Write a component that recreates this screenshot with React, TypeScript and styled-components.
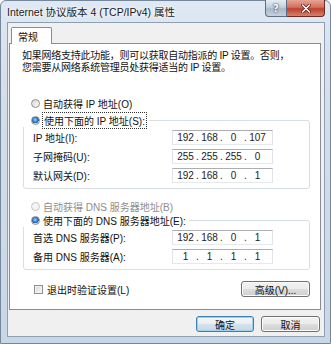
import React from "react";
import styled, { createGlobalStyle } from "styled-components";

const GlobalStyle = createGlobalStyle`
  html, body {
    margin: 0;
    padding: 0;
    width: 331px;
    height: 344px;
    overflow: hidden;
  }
  body {
    font-family: "Liberation Sans", "Noto Sans CJK SC", sans-serif;
    font-size: 10px;
    color: #111;
  }
`;

const Window = styled.div`
  width: 331px;
  height: 344px;
  box-sizing: border-box;
  display: flex;
  flex-direction: column;
  padding: 0 5px 6px 6px;
  background: linear-gradient(180deg, #dfe8f3 0%, #d3deeb 30%, #c9d6e5 100%);
  border: 1px solid #75879b;
  border-radius: 6px 6px 0 0;
`;

const TitleBar = styled.div`
  height: 21px;
  display: flex;
  align-items: flex-start;
`;

const Title = styled.div`
  padding-top: 5px;
  font-size: 10.5px;
  line-height: 13px;
  color: #1a1a1a;
  text-shadow: 0 0 6px #ffffff, 0 0 3px #ffffff;
`;

const CaptionButtons = styled.div`
  margin-left: auto;
  margin-top: -1px;
  display: flex;
`;

const CaptionButton = styled.div<{ $close?: boolean }>`
  height: 17px;
  width: ${p => (p.$close ? "38px" : "22px")};
  box-sizing: border-box;
  display: flex;
  align-items: center;
  justify-content: center;
  border: 1px solid ${p => (p.$close ? "#6a2b22" : "#5d6f84")};
  border-top: none;
  border-left-width: ${p => (p.$close ? "0" : "1px")};
  border-radius: ${p => (p.$close ? "0 0 4px 0" : "0 0 0 4px")};
  background: ${p =>
    p.$close
      ? "linear-gradient(180deg, #e8a493 0%, #d4705c 45%, #c0402a 55%, #d4826e 100%)"
      : "linear-gradient(180deg, #e6ecf3 0%, #c3cfdc 45%, #a9b8c9 55%, #c4d1de 100%)"};
  color: #fff;
  font-family: "DejaVu Sans", sans-serif;
  font-weight: bold;
  font-size: 10px;
  text-shadow: 0 0 2px #30404f, 0 0 1px #30404f;
`;

const Client = styled.div`
  flex: 1;
  display: flex;
  flex-direction: column;
  background: #f0f0f0;
  border: 1px solid #8e9fb4;
  padding: 4px 3px 4px 1px;
`;

const TabStrip = styled.div`
  display: flex;
  padding-left: 2px;
`;

const Tab = styled.div`
  position: relative;
  z-index: 1;
  width: 41px;
  height: 17px;
  box-sizing: border-box;
  margin-bottom: -1px;
  border: 1px solid #898c95;
  border-bottom: none;
  border-radius: 2px 2px 0 0;
  background: #fff;
  display: flex;
  align-items: center;
  padding-left: 6px;
  font-size: 10px;
`;

const Panel = styled.div`
  flex: 1;
  display: flex;
  flex-direction: column;
  border: 1px solid #898c95;
  background: #fff;
  padding: 6px 10px 0 12px;
`;

const Intro = styled.p`
  margin: 0;
  font-size: 10px;
  line-height: 12px;
  letter-spacing: -0.25px;
`;

const RadioRow = styled.label<{ $disabled?: boolean }>`
  display: flex;
  align-items: center;
  gap: 3px;
  height: 14px;
  padding-left: 9px;
  font-size: 10px;
  color: ${p => (p.$disabled ? "#8d8d8d" : "#111")};
  margin-top: ${p => (p.$disabled ? "10px" : "0")};
`;

const FirstRadio = styled(RadioRow)`
  margin-top: 22px;
`;

const RadioDot = styled.span<{ $checked?: boolean; $disabled?: boolean }>`
  width: 9px;
  height: 9px;
  box-sizing: border-box;
  border-radius: 50%;
  border: 1px solid ${p => (p.$disabled ? "#c4c4c4" : "#8e8f8f")};
  background: ${p =>
    p.$checked
      ? "radial-gradient(circle at 45% 40%, #9fd5ff 0%, #3a8ee0 35%, #1a4f9a 60%, #e8eef5 66%, #f4f4f4 100%)"
      : p.$disabled
      ? "#f4f4f4"
      : "linear-gradient(135deg, #d9d9d9, #fafafa)"};
  flex-shrink: 0;
`;

const FocusText = styled.span`
  outline: 1px dotted #333;
  outline-offset: 0;
  padding: 0 1px;
`;

const Group = styled.fieldset<{ $gap?: number }>`
  margin: ${p => p.$gap ?? 0}px 0 0 1px;
  padding: 3px 0 5px 9px;
  border: 1px solid #d5dfe5;
  border-radius: 3px;
  min-width: 0;
`;

const GroupLegend = styled.legend`
  margin-left: -11px;
  padding: 0 3px 0 0;
`;

const Fields = styled.div`
  display: grid;
  grid-template-columns: 139px 101px;
  row-gap: 4px;
  align-items: center;
`;

const FieldLabel = styled.span`
  font-size: 10px;
`;

const IpBox = styled.div`
  height: 15px;
  box-sizing: border-box;
  display: flex;
  align-items: center;
  padding-left: 3px;
  background: #fff;
  border: 1px solid #e2e3ea;
  border-top-color: #abadb3;
  border-bottom-color: #e3e9ef;
  font-size: 10px;
  color: #222;
`;

const Octet = styled.span`
  width: 19px;
  text-align: center;
`;

const Dot = styled.span`
  width: 5px;
  text-align: center;
`;

const BottomRow = styled.div`
  display: flex;
  align-items: center;
  justify-content: space-between;
  margin-top: 11px;
  padding-left: 12px;
`;

const CheckLabel = styled.label`
  display: flex;
  align-items: center;
  gap: 4px;
  font-size: 10px;
`;

const CheckBox = styled.span`
  width: 9px;
  height: 9px;
  box-sizing: border-box;
  border: 1px solid #8e8f8f;
  background: linear-gradient(135deg, #d6d6d6, #f8f8f8);
  box-shadow: inset 0 0 0 1px #f4f4f4;
`;

const Button = styled.div<{ $default?: boolean; $width: number }>`
  width: ${p => p.$width}px;
  height: 16px;
  box-sizing: border-box;
  display: flex;
  align-items: center;
  justify-content: center;
  border: 1px solid ${p => (p.$default ? "#3c7fb1" : "#707070")};
  border-radius: 3px;
  background: ${p =>
    p.$default
      ? "linear-gradient(180deg, #f4f8fb 0%, #e6edf3 50%, #d6e2ec 51%, #c9d8e5 100%)"
      : "linear-gradient(180deg, #f2f2f2 0%, #ebebeb 50%, #dddddd 51%, #cfcfcf 100%)"};
  box-shadow: inset 0 0 0 1px ${p => (p.$default ? "#9ed0ef" : "#fbfbfb")};
  font-size: 10px;
  color: #111;
`;

const DialogButtons = styled.div`
  display: flex;
  justify-content: flex-end;
  gap: 7px;
  margin-top: 6px;
  padding-right: 1px;
`;

const Spacer = styled.div`
  flex: 1;
`;

const CloseIcon = () => (
  <svg width="10" height="9" viewBox="0 0 10 9">
    <path d="M1.5 1 L8.5 8 M8.5 1 L1.5 8" stroke="#5a1a12" strokeWidth="3" strokeLinecap="round" />
    <path d="M1.5 1 L8.5 8 M8.5 1 L1.5 8" stroke="#fff" strokeWidth="1.6" strokeLinecap="round" />
  </svg>
);

const IpAddress: React.FC<{ value: string }> = ({ value }) => {
  const parts = value.split(".");
  return (
    <IpBox>
      {parts.map((p, i) => (
        <React.Fragment key={i}>
          <Octet>{p}</Octet>
          {i < 3 && <Dot>.</Dot>}
        </React.Fragment>
      ))}
    </IpBox>
  );
};

export default function App() {
  return (
    <>
      <GlobalStyle />
      <Window>
        <TitleBar>
          <Title>Internet 协议版本 4 (TCP/IPv4) 属性</Title>
          <CaptionButtons>
            <CaptionButton>?</CaptionButton>
            <CaptionButton $close>
              <CloseIcon />
            </CaptionButton>
          </CaptionButtons>
        </TitleBar>
        <Client>
          <TabStrip>
            <Tab>常规</Tab>
          </TabStrip>
          <Panel>
            <Intro>
              如果网络支持此功能，则可以获取自动指派的 IP 设置。否则，
              <br />
              您需要从网络系统管理员处获得适当的 IP 设置。
            </Intro>

            <FirstRadio>
              <RadioDot />
              自动获得 IP 地址(O)
            </FirstRadio>
            <Group $gap={3}>
              <GroupLegend>
                <RadioRow>
                  <RadioDot $checked />
                  <FocusText>使用下面的 IP 地址(S):</FocusText>
                </RadioRow>
              </GroupLegend>
              <Fields>
                <FieldLabel>IP 地址(I):</FieldLabel>
                <IpAddress value="192.168.0.107" />
                <FieldLabel>子网掩码(U):</FieldLabel>
                <IpAddress value="255.255.255.0" />
                <FieldLabel>默认网关(D):</FieldLabel>
                <IpAddress value="192.168.0.1" />
              </Fields>
            </Group>

            <RadioRow $disabled>
              <RadioDot $disabled />
              自动获得 DNS 服务器地址(B)
            </RadioRow>
            <Group>
              <GroupLegend>
                <RadioRow>
                  <RadioDot $checked />
                  使用下面的 DNS 服务器地址(E):
                </RadioRow>
              </GroupLegend>
              <Fields>
                <FieldLabel>首选 DNS 服务器(P):</FieldLabel>
                <IpAddress value="192.168.0.1" />
                <FieldLabel>备用 DNS 服务器(A):</FieldLabel>
                <IpAddress value="1.1.1.1" />
              </Fields>
            </Group>

            <BottomRow>
              <CheckLabel>
                <CheckBox />
                退出时验证设置(L)
              </CheckLabel>
              <Button $width={69}>高级(V)...</Button>
            </BottomRow>
            <Spacer />
          </Panel>
          <DialogButtons>
            <Button $default $width={58}>确定</Button>
            <Button $width={59}>取消</Button>
          </DialogButtons>
        </Client>
      </Window>
    </>
  );
}
